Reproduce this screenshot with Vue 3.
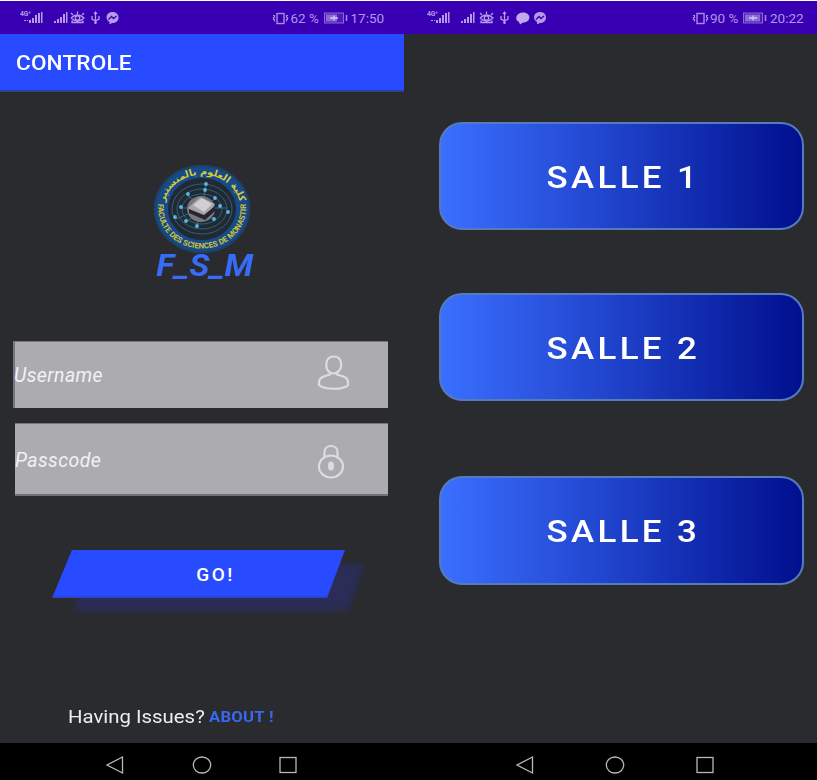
<script setup>
const phones = [
  { id: 'login', charge: '62 %', time: '17:50', chat: false },
  { id: 'rooms', charge: '90 %', time: '20:22', chat: true },
]
const rooms = ['SALLE 1', 'SALLE 2', 'SALLE 3']
const nodes = [[67, 29], [66, 35], [49, 39], [76, 43], [42, 52], [81, 51], [89, 57], [36, 62], [47, 66], [58, 71], [75, 64]]
</script>

<template>
  <main class="board">
    <section v-for="p in phones" :key="p.id" class="phone" :class="p.id">
      <header class="status">
        <svg class="signals" width="132" height="20" viewBox="0 0 132 20">
          <g fill="#b69be9">
            <text x="0" y="8" font-size="7" font-weight="700" textLength="11" lengthAdjust="spacingAndGlyphs">4G⁺</text>
            <path d="M4 12h2v1H4zM7 12h1v1H7zM9 12h2v3H9zM12 10h2v5h-2zM15 7h2v8h-2zM18 5h2v10h-2zM21 4h1.500v11H21z" />
            <path d="M34 13h2v2h-2zM37 11h2v4h-2zM40 9h2v6h-2zM43 6h2v9h-2zM46 4h1.500v11H46z" />
          </g>
          <g :transform="p.chat ? 'translate(2 0)' : ''">
            <g fill="none" stroke="#b69be9" stroke-width="1.300">
              <path d="M51 10Q57.500 4 64 10Q57.500 16 51 10M57.500 6V3.500M53 7l-2-2M62 7l2-2M52.500 12.500l-1 2M62.500 12.500l1 2M51.500 14.500h12" />
              <circle cx="57.500" cy="10" r="2.200" />
              <path d="M75.500 4v12M72 8v3l3.500 2 3.500-2V8" />
            </g>
            <path d="M73.500 6l2-3 2 3z" fill="#b69be9" />
            <circle cx="75.500" cy="14.500" r="1.300" fill="#b69be9" />
          </g>
          <path v-if="p.chat" d="M96 4.500c8.500 0 8.500 10 0 10l-3 2-1-2.500c-5-2-3-9.500 4-9.500" fill="#c1a9ef" />
          <g :transform="p.chat ? 'translate(20.500 0)' : ''">
            <path d="M92.500 4c8 0 8 11 0 11l-3 1.300V14c-5-3-3.500-10 3-10" fill="#b69be9" />
            <path d="M88.500 11.500l3-3 2 2 3-2.500" fill="none" stroke="#3b05b4" stroke-width="1.400" />
          </g>
        </svg>
        <div class="readout">
          <svg width="17" height="13" viewBox="0 0 17 13" fill="none" stroke="#a98be4">
            <rect x="5" y="1.500" width="7" height="10" stroke-width="1.400" />
            <path d="M1 3.500h1.500v2H1.500v2h1v2M16 3.500h-1.500v2h1v2h-1v2" stroke-width="1.200" />
          </svg>
          <span class="charge">{{ p.charge }}</span>
          <svg class="battery" width="24" height="12" viewBox="0 0 24 12">
            <rect x=".5" y="1" width="19" height="10" fill="#4c1bb9" stroke="#8a68d6" />
            <rect x="2" y="2.500" :width="p.chat ? 15 : 11" height="7" fill="#8a68d6" />
            <path d="M6 6h8M10 3.500v5" stroke="#d6c6f5" stroke-width="1.300" />
            <path d="M22.500 3v6" stroke="#a98be4" stroke-width="1.500" />
          </svg>
          <span class="time">{{ p.time }}</span>
        </div>
      </header>

      <template v-if="p.id === 'login'">
        <h1 class="appbar"><span>CONTROLE</span></h1>
        <div class="brand">
          <svg class="seal" width="98" height="90" viewBox="0 0 98 90">
            <defs>
              <path id="arc-top" d="M11.600 37A38.500 34.500 0 0 1 86.400 37" />
              <path id="arc-bottom" d="M5.500 38A44 40.500 0 1 0 92.500 38" />
            </defs>
            <ellipse cx="49" cy="45" rx="48" ry="44" fill="#174a8b" />
            <ellipse cx="49" cy="45" rx="47" ry="43" fill="none" stroke="#1d4168" stroke-width="2" />
            <ellipse cx="49" cy="45" rx="34" ry="31" fill="#202934" />
            <g fill="none" stroke="#386d7f" stroke-width=".8">
              <ellipse cx="49" cy="45" rx="30" ry="25" />
              <ellipse cx="49" cy="45" rx="25" ry="20" />
              <ellipse cx="49" cy="45" rx="20" ry="15" />
            </g>
            <path d="M49 44L53 20M49 44L34 31M49 44L62 35M49 44H74M49 44L23 55M49 44L61 57M49 44L43 64M49 44H27M49 44L34 58" fill="none" stroke="#357b9b" stroke-width=".8" />
            <ellipse cx="48" cy="45" rx="14" ry="13" fill="#77777f" />
            <path d="M35 44l12-11 15 7-10 15z" fill="#a9a5ad" />
            <path d="M36 45l15 6 11-9v5l-10 9-16-7z" fill="#25262e" />
            <path d="M40 41l9-7 10 6-8 8z" fill="#d2cfd4" />
            <g fill="#59b8df">
              <circle v-for="(n, i) in nodes" :key="i" :cx="n[0] - 14" :cy="n[1] - 9" r="1.900" />
            </g>
            <text class="arabic"><textPath href="#arc-top" startOffset="50%" text-anchor="middle">كلية العلوم بالمنستير</textPath></text>
            <text class="latin"><textPath href="#arc-bottom" startOffset="50%" text-anchor="middle">FACULTE DES SCIENCES DE MONASTIR</textPath></text>
          </svg>
          <strong>F_S_M</strong>
        </div>
        <form class="fields">
          <label class="field user">
            <span>Username</span>
            <svg width="34" height="36" viewBox="0 0 34 36">
              <path d="M17 1.500c-10 0-9 13-4 16v2C8 21 2 22 2 27v3c5 5 25 5 29 0v-3c0-5-6-6-11-7.500v-2C26 14 26 1.500 17 1.500M13 17.500q4 2 7 0" />
            </svg>
          </label>
          <label class="field pass">
            <span>Passcode</span>
            <svg width="28" height="36" viewBox="0 0 28 36">
              <ellipse cx="14" cy="22.500" rx="12" ry="11" />
              <path d="M7.500 13V8c0-8 13-8 13 0v5" />
              <ellipse cx="14" cy="22" rx="1.500" ry="3" stroke-width="3" />
            </svg>
          </label>
        </form>
        <div class="go">
          <svg width="330" height="76" viewBox="0 0 330 76">
            <path class="shadow" d="M50 24H324L309 71H34z" />
            <path d="M32 10H305L287 58H12z" fill="#294bff" />
            <path d="M13 57.300H287" stroke="#2b43c5" stroke-width="1.400" />
          </svg>
          <button type="button">GO!</button>
        </div>
        <p class="help"><span class="question"><span>Having Issues?</span></span><b>ABOUT !</b></p>
      </template>

      <div v-else class="rooms-list">
        <button v-for="r in rooms" :key="r" type="button" class="room"><span>{{ r }}</span></button>
      </div>

      <footer class="nav">
        <svg width="18" height="20" viewBox="0 0 18 20"><path d="M16.500 2v16L1 10z" /></svg>
        <svg width="20" height="20" viewBox="0 0 20 20"><ellipse cx="10" cy="10" rx="8.700" ry="8" /></svg>
        <svg width="18" height="20" viewBox="0 0 18 20"><rect x="1" y="2.500" width="16" height="15" /></svg>
      </footer>
    </section>
  </main>
</template>

<style>
body { margin: 0; background: #2a2b2f; }
</style>

<style scoped>
* { box-sizing: border-box; }
.board { display: flex; width: 817px; height: 780px; overflow: hidden; border-top: 1px solid #fff; background: #2a2b2f; font-family: Roboto, "Noto Sans", sans-serif; color: #fff; }
.phone { display: flex; flex-direction: column; width: 404px; height: 779px; }
.phone.rooms { width: 413px; }
svg { display: block; flex: none; }
.status { flex: none; height: 32.500px; display: flex; justify-content: space-between; padding: 7px 17.500px 0 20px; background: #3900b3; }
.rooms .status { padding: 7px 11px 0 23px; }
.readout { display: flex; align-items: center; height: 20px; color: #b196e8; font-size: 13.500px; }
.charge { width: 33px; margin-left: 1.500px; font-size: 13.500px; white-space: nowrap; }
.battery { margin-right: 3px; }
.time { width: 36px; white-space: nowrap; }
.appbar { flex: none; height: 58.500px; margin: 0; padding: 0 16px; display: flex; align-items: center; background: #294bff; border-bottom: 2px solid #2c4190; font-size: 20.500px; font-weight: 500; line-height: 1; letter-spacing: .15px; }
.appbar span { padding-top: 2px; transform: scaleX(1.1); transform-origin: 0 50%; }
.brand { flex: none; height: 249px; padding-top: 72px; display: flex; flex-direction: column; align-items: center; }
.brand strong { margin: -5px 0 0 5px; line-height: 34px; font-size: 31px; font-style: italic; font-weight: 700; letter-spacing: .3px; color: #386bf8; transform: scaleX(1.085); }
.arabic { font: 700 9.600px "DejaVu Sans", sans-serif; fill: #d6cb35; }
.latin { font: 700 7.900px Roboto, sans-serif; fill: #cfc236; }
.fields { flex: none; display: flex; flex-direction: column; gap: 15px; width: 375px; margin-left: 13px; }
.field { display: flex; align-items: center; justify-content: space-between; background: #acabb0; color: #f3f1f5; font-size: 19.500px; font-style: italic; letter-spacing: .4px; }
.field svg { fill: none; stroke: #dedce2; stroke-width: 2.200; }
.user { height: 67px; padding: 0 37px 0 0; border-left: 2px solid #77767d; border-top: 1px solid #77767d; }
.user span { margin-left: -1px; }
.user svg { margin-top: -4px; }
.pass { height: 73px; margin-left: 2px; padding: 0 43px 0 0; border-top: 1px solid #77767d; border-bottom: 2px solid #717078; }
.pass span { margin-top: 2px; }
.pass svg { margin-top: 5px; }
.go { display: grid; flex: none; width: 330px; margin: 44px 0 0 40px; }
.go > * { grid-area: 1 / 1; }
.shadow { fill: #2a2d55; filter: blur(2.500px); }
.go button { align-self: start; height: 48px; margin: 10px 0 0; padding: 0 0 0 21px; border: 0; background: none; color: #fff; font: 500 19px Roboto, sans-serif; letter-spacing: 2.400px; z-index: 1; }
.help { flex: 1; display: flex; align-items: flex-end; margin: 0; padding: 0 0 14px 68px; line-height: 24px; font-size: 18.700px; }
.question { width: 141px; color: #ededf0; white-space: nowrap; }
.question span { display: inline-block; transform: scaleX(1.09); transform-origin: 0 50%; }
.help b { font-size: 14.800px; color: #3967ee; letter-spacing: .2px; line-height: 23px; transform: scaleX(1.13); transform-origin: 0 50%; }
.rooms-list { flex: 1; display: grid; grid-template-rows: 108px 108px 109px; row-gap: 63px; padding: 88.500px 13px 0 35px; }
.room { display: flex; align-items: center; justify-content: center; border: 2px solid #557bbd; border-radius: 23px; background: linear-gradient(90deg, #3b6fff, #2145ce 45%, #000f8d) border-box; color: #fff; font: 500 31px Roboto, sans-serif; letter-spacing: 3px; padding: 2px 0 0 3px; }
.room span { transform: scaleX(1.125); }
.room:last-child { position: relative; top: 12px; }
.nav { flex: none; height: 37px; background: #000; display: flex; align-items: flex-start; padding: 12px 107px 0 106px; justify-content: space-between; }
.rooms .nav { padding: 12px 103px 0 112px; }
.nav svg { fill: none; stroke: #b8b8b8; stroke-width: 1.300; }
</style>
